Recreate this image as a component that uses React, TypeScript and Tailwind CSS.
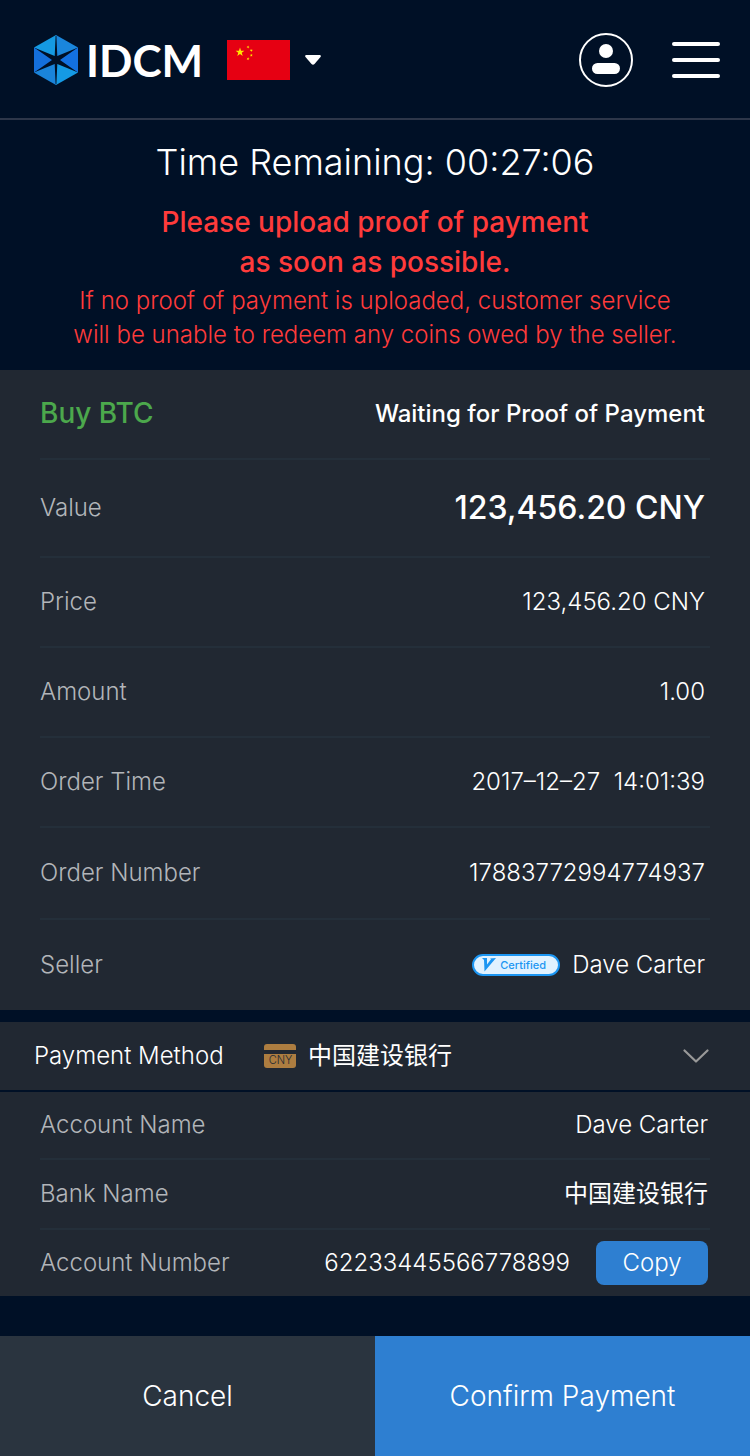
import { useState, type ReactNode } from "react";

function LogoMark() {
  return (
    <svg viewBox="0 0 44 50" className="h-[50px] w-11" aria-hidden="true">
      <path d="M22 0 0 12.5 22 25Z" fill="#159ae2" />
      <path d="M22 0 44 12.5 22 25Z" fill="#1a86dc" />
      <path d="M0 12.5V37.5L22 25Z" fill="#146fdc" />
      <path d="M44 12.5V37.5L22 25Z" fill="#1371e2" />
      <path d="M0 37.5 22 50V25Z" fill="#1a84da" />
      <path d="M44 37.5 22 50V25Z" fill="#159ae4" />
      <g fill="#001026">
        <path d="M21.6 1H22.400L23.300 21 43.500 12.700 26 25 43.500 37.300 23.300 29 22.400 49H21.600L20.700 29 0.500 37.300 18 25 0.500 12.700 20.700 21Z" />
      </g>
    </svg>
  );
}

function Star({ x, y, r, turn = 0 }: { x: number; y: number; r: number; turn?: number }) {
  const points = Array.from({ length: 10 }, (_, i) => {
    const a = (Math.PI / 5) * i - Math.PI / 2 + (turn * Math.PI) / 180;
    const d = i % 2 === 0 ? r : r * 0.4;
    return `${x + d * Math.cos(a)},${y + d * Math.sin(a)}`;
  }).join(" ");
  return <polygon points={points} fill="#ffe600" />;
}

function Flag() {
  return (
    <svg viewBox="0 0 63 40" className="h-10 w-[63px]" aria-hidden="true">
      <rect width="63" height="40" fill="#e60012" />
      <Star x={13} y={12.2} r={4.6} />
      <Star x={21} y={7} r={1.6} turn={20} />
      <Star x={24.3} y={10.5} r={1.6} turn={40} />
      <Star x={24.3} y={15.3} r={1.6} />
      <Star x={21} y={18.800} r={1.6} turn={20} />
    </svg>
  );
}

function Row({ label, children, height, last = false }: { label: ReactNode; children: ReactNode; height: string; last?: boolean }) {
  return (
    <div className={`flex items-center justify-between ${height} ${last ? "" : "border-b-2 border-[#242f3a]"}`}>
      <dt className="text-[#b2b5b9]">{label}</dt>
      <dd className="flex items-center text-white">{children}</dd>
    </div>
  );
}

function Certified() {
  return (
    <span className="mr-3 flex h-[22px] w-[88px] items-center gap-1 rounded-full border-2 border-[#1c96f2] bg-[#e1f2ff] pl-2 text-[11px] font-medium text-[#1c96f2]">
      <svg viewBox="0 0 14 14" className="size-[14px] shrink-0" aria-hidden="true">
        <path d="M0 0H5L5 6.500 9 1.200 8 0.500 14 0 2.500 13.500 2 2Z" fill="#1c96f2" />
      </svg>
      Certified
    </span>
  );
}

export default function App() {
  const [bank, setBank] = useState("ccb");
  return (
    <div className="flex min-h-screen flex-col bg-[#001026] font-['Inter','Noto_Sans_CJK_SC',sans-serif] text-[24px] leading-[34px] font-light text-white">
      <header className="flex h-[120px] items-center border-b-2 border-[#2d3649] pt-[2px] pr-[30px] pl-[34px]">
        <a href="#" className="flex items-center gap-2 font-['Lato',sans-serif] text-[44px] leading-[50px] font-bold">
          <LogoMark />
          IDCM
        </a>
        <button type="button" aria-label="Language" className="ml-6 flex items-center gap-[15px]">
          <Flag />
          <svg viewBox="0 0 16 10" className="h-[10px] w-4" aria-hidden="true">
            <path d="M1 0H15Q16.500 0.500 15.500 2L9.500 9Q8 10.500 6.500 9L0.500 2Q-0.500 0.500 1 0Z" fill="#fff" />
          </svg>
        </button>
        <button type="button" aria-label="Account" className="ml-auto">
          <svg viewBox="0 0 54 54" className="size-[54px]" aria-hidden="true">
            <circle cx="27" cy="27" r="26" fill="none" stroke="#fff" strokeWidth="2" />
            <circle cx="27" cy="18" r="7" fill="#fff" />
            <rect x="13" y="30" width="28" height="11" rx="5.500" fill="#fff" />
          </svg>
        </button>
        <button type="button" aria-label="Menu" className="ml-[39px] flex w-12 flex-col gap-3">
          <span className="h-1 rounded-full bg-white" />
          <span className="h-1 rounded-full bg-white" />
          <span className="h-1 rounded-full bg-white" />
        </button>
      </header>

      <main>
        <section className="px-10 pt-[22px] pb-[18px] text-center text-[#ff3b3b]">
          <h1 className="text-[36px] leading-10 text-white">Time Remaining: 00:27:06</h1>
          <p className="mt-5 text-[28px] leading-10 font-medium">
            Please upload proof of payment
            <br />
            as soon as possible.
          </p>
          <p className="mt-[2px]">
            If no proof of payment is uploaded, customer service
            <br />
            will be unable to redeem any coins owed by the seller.
          </p>
        </section>

        <dl className="bg-[#212832] px-10 [&_dd]:pr-[5px]">
          <Row height="h-[90px]" label={<span className="text-[28px] font-medium text-[#4ca84c]">Buy BTC</span>}>
            <span className="font-medium">Waiting for Proof of Payment</span>
          </Row>
          <Row height="h-[98px]" label="Value">
            <span className="text-[32px] font-medium">123,456.20 CNY</span>
          </Row>
          <Row height="h-[90px]" label="Price">123,456.20 CNY</Row>
          <Row height="h-[90px]" label="Amount">1.00</Row>
          <Row height="h-[90px]" label="Order Time">
            <span className="whitespace-pre">2017–12–27  14:01:39</span>
          </Row>
          <Row height="h-[92px]" label="Order Number">17883772994774937</Row>
          <Row height="h-[90px]" label="Seller" last>
            <Certified />
            Dave Carter
          </Row>
        </dl>

        <div className="mt-3 flex h-[68px] items-center bg-[#212832] pr-[41px] pl-[34px]">
          <label htmlFor="bank" className="w-[230px]">Payment Method</label>
          <svg viewBox="0 0 32 24" className="h-6 w-8" aria-hidden="true">
            <rect width="32" height="24" rx="3" fill="#ad7d40" />
            <rect y="6" width="32" height="4" fill="#212832" />
            <text x="16.500" y="20" textAnchor="middle" fontSize="11" fontWeight="300" fill="#212832">CNY</text>
          </svg>
          <div className="grid flex-1 items-center">
            <select id="bank" value={bank} onChange={(e) => setBank(e.target.value)} className="col-start-1 row-start-1 h-10 w-full appearance-none bg-transparent pl-3 font-normal">
              <option value="ccb">中国建设银行</option>
            </select>
            <svg viewBox="0 0 26 14" className="pointer-events-none col-start-1 row-start-1 h-[14px] w-[26px] justify-self-end" aria-hidden="true">
              <path d="M1.500 1.500 13 12.500 24.500 1.500" fill="none" stroke="#999" strokeWidth="2.200" strokeLinecap="round" strokeLinejoin="round" />
            </svg>
          </div>
        </div>

        <dl className="mt-[2px] bg-[#212832] px-10 [&_dd]:pr-[2px]">
          <Row height="h-[68px]" label="Account Name">Dave Carter</Row>
          <Row height="h-[70px]" label="Bank Name">
            <span className="font-normal">中国建设银行</span>
          </Row>
          <Row height="h-[66px]" label="Account Number" last>
            62233445566778899
            <button type="button" className="ml-[26px] h-11 w-28 rounded-lg bg-[#2e7fd1]">Copy</button>
          </Row>
        </dl>
      </main>

      <footer className="mt-10 grid h-[120px] grid-cols-2 text-[28px]">
        <button type="button" className="bg-[#2a343f]">Cancel</button>
        <button type="button" className="bg-[#2e7fd1]">Confirm Payment</button>
      </footer>
    </div>
  );
}
